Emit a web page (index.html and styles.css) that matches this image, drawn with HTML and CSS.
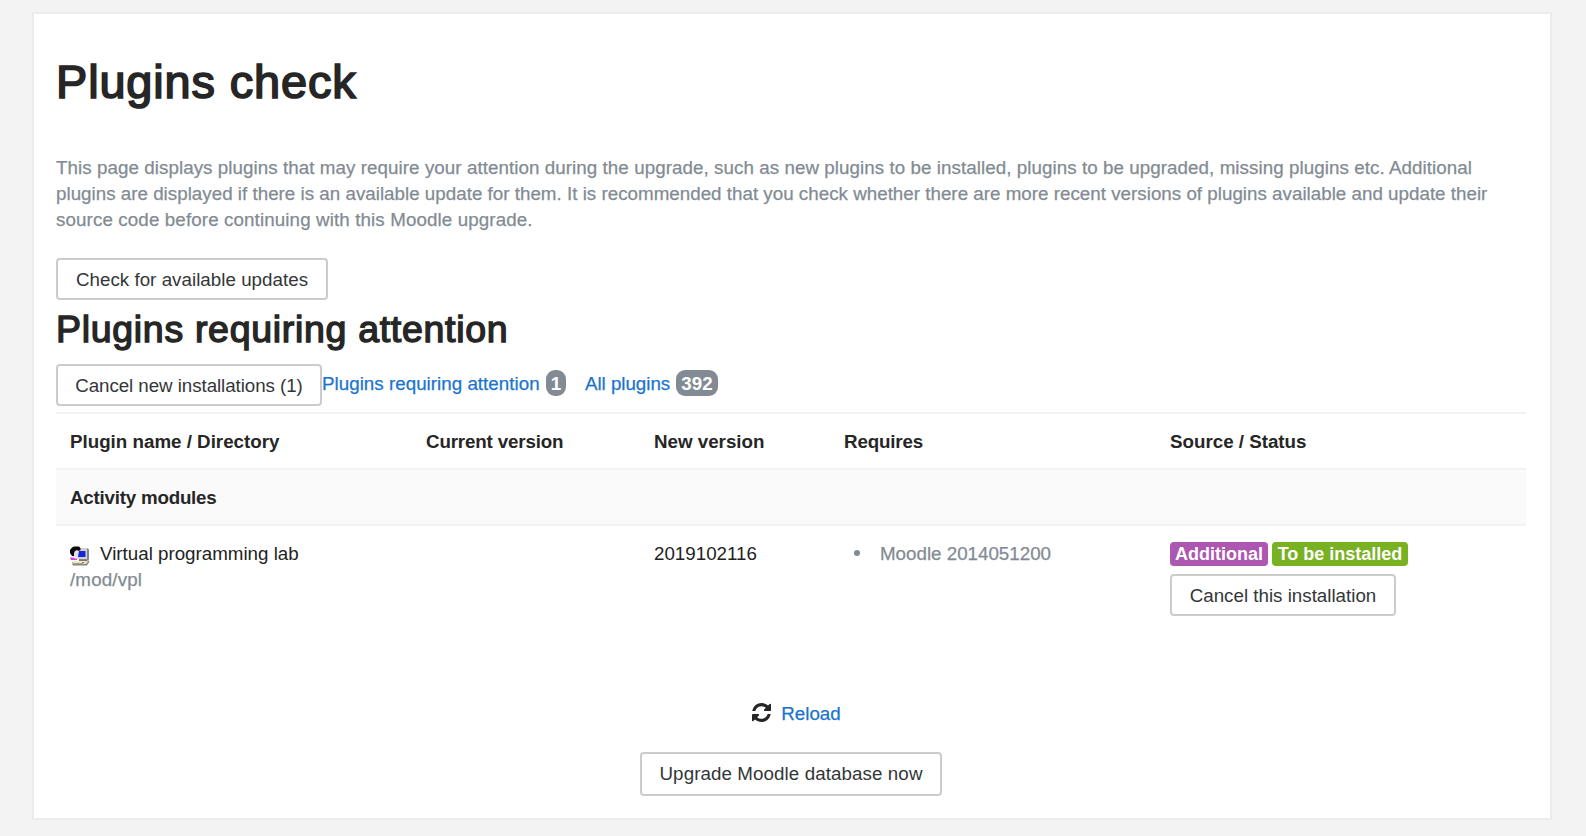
FILE: index.html
```html
<!DOCTYPE html>
<html lang="en">
<head>
<meta charset="utf-8">
<title>Plugins check</title>
<link rel="stylesheet" href="styles.css">
</head>
<body>
<main class="card">
  <h1 class="title">Plugins check</h1>
  <p class="intro"><span class="l1">This page displays plugins that may require your attention during the upgrade, such as new plugins to be installed, plugins to be upgraded, missing plugins etc. Additional</span><br><span class="l2">plugins are displayed if there is an available update for them. It is recommended that you check whether there are more recent versions of plugins available and update their</span><br><span class="l3">source code before continuing with this Moodle upgrade.</span></p>
  <button class="btn btn-check">Check for available updates</button>
  <h2 class="subtitle">Plugins requiring attention</h2>
  <div class="filters">
    <button class="btn btn-cancel-all">Cancel new installations (1)</button>
    <a class="link link-req" href="#">Plugins requiring attention</a><span class="count count-one">1</span>
    <a class="link link-all" href="#">All plugins</a><span class="count count-all">392</span>
  </div>
  <div class="table">
    <div class="row head">
      <div>Plugin name / Directory</div>
      <div class="tight">Current version</div>
      <div>New version</div>
      <div class="tight">Requires</div>
      <div>Source / Status</div>
    </div>
    <div class="row group"><div class="tighter">Activity modules</div></div>
    <div class="row plugin">
      <div>
        <div class="name">
          <svg class="icon" viewBox="0 0 20 20">
            <path d="M9 2h8l2 1.500v10l-1.500 1H9z" fill="#85858a"/>
            <path d="M9 2h8v11H7z" fill="#d3d2cf"/>
            <path d="M9 5h6.500v6H8z" fill="#1a24dc"/>
            <path d="M3 4h5v4l-1 3H3z" fill="#e4dcf5"/>
            <path d="M0 7V4l2-2.500L4 .5h5l1.500 1.500v2L8.500 5 7 4 5 5 4 7v3H2z" fill="#0a0a0a"/>
            <path d="M0 11.500h3l2 1h2v1.500H1z" fill="#e03be0"/>
            <path d="M9 14h8v1H9z" fill="#77756b"/>
            <path d="M2 16h13l3-2 1.500 1.500-2.500 4H3l-1-1.500z" fill="#8a8878"/>
            <path d="M3 15.500h12l2.500-1V17L15 18H2z" fill="#e2dfcb"/>
            <path d="M3 17h10v1H3z" fill="#a9ad72"/>
            <path d="M12 16h2v1h-2z" fill="#b55"/>
          </svg>
          <span>Virtual programming lab</span>
        </div>
        <div class="dir">/mod/vpl</div>
      </div>
      <div></div>
      <div>2019102116</div>
      <div class="req"><i class="dot"></i><span>Moodle 2014051200</span></div>
      <div class="status">
        <div class="labels"><span class="label add">Additional</span><span class="label inst">To be installed</span></div>
        <button class="btn btn-cancel-one">Cancel this installation</button>
      </div>
    </div>
  </div>
  <div class="reload">
    <svg class="spin" viewBox="0 0 1536 1536"><path fill="#262626" d="M1511 928q0 5-1 7-64 268-268 434.500T764 1536q-146 0-282.500-55T238 1324l-129 129q-19 19-45 19t-45-19-19-45V960q0-26 19-45t45-19h448q26 0 45 19t19 45-19 45l-137 137q71 66 161 102t187 36q134 0 250-65t186-179q11-17 53-117 8-23 30-23h192q13 0 22.500 9.500t9.500 22.500zm25-800v448q0 26-19 45t-45 19h-448q-26 0-45-19t-19-45 19-45l138-138Q969 256 768 256q-134 0-250 65T332 500q-11 17-53 117-8 23-30 23H50q-13 0-22.500-9.500T18 608v-7q65-268 270-434.500T768 0q146 0 284 55.500T1297 212l130-129q19-19 45-19t45 19 19 45z"/></svg>
    <a class="link" href="#">Reload</a>
  </div>
  <button class="btn btn-upgrade">Upgrade Moodle database now</button>
</main>
</body>
</html>
```
FILE: styles.css
```css
* { box-sizing: border-box; }
body {
  margin: 0;
  padding: 12px 34px 0 32px;
  background: #f3f3f3;
  color: #222;
  font: 18.75px/26px "Liberation Sans", Arial, sans-serif;
}
.card {
  display: flex;
  flex-direction: column;
  align-items: flex-start;
  height: 808px;
  padding: 40px 24px 0 22px;
  background: #fff;
  border: 2px solid #ececec;
}
.title, .subtitle {
  margin: 0;
  color: #262626;
  font-weight: 400;
  white-space: nowrap;
}
.title {
  font-size: 46.875px;
  line-height: 56px;
  letter-spacing: .88px;
  -webkit-text-stroke: 1.7px #262626;
}
.subtitle {
  margin-top: 7px;
  font-size: 37.5px;
  line-height: 45px;
  letter-spacing: .69px;
  -webkit-text-stroke: 1.4px #262626;
}
.intro {
  margin: 45px 0 25px;
  color: #828b93;
  white-space: nowrap;
}
.intro, .link, .dir, .req { -webkit-text-stroke: .25px currentColor; }
.l1 { letter-spacing: .07px; }
.l2 { letter-spacing: .02px; }
.l3 { letter-spacing: .12px; }
.btn {
  height: 42px;
  padding: 1px 0 0;
  background: #fff;
  border: 2px solid #ccc;
  border-radius: 4px;
  color: #333639;
  font: inherit;
  line-height: 36px;
  text-align: center;
  white-space: nowrap;
}
.btn-check { width: 272px; letter-spacing: .03px; }
.btn-cancel-all { width: 266px; letter-spacing: -.06px; }
.btn-cancel-one { width: 226px; margin-top: 8px; }
.btn-upgrade {
  align-self: center;
  width: 302px;
  height: 44px;
  margin-top: 25px;
  padding: 0 0 1px;
  letter-spacing: .09px;
}
.filters {
  display: flex;
  align-items: flex-start;
  margin-top: 12px;
}
.link { color: #1b74ce; text-decoration: none; white-space: nowrap; }
.link-req { width: 217px; margin: 7px 0 0; letter-spacing: .03px; }
.link-all { margin: 7px 0 0 19px; width: 85px; letter-spacing: -.03px; }
.count {
  height: 26px;
  margin: 6px 0 0 6px;
  border-radius: 9px;
  background: #828b93;
  color: #fff;
  font-weight: 700;
  line-height: 27px;
  text-align: center;
}
.count-one { width: 20px; margin-left: 7px; }
.count-all { width: 42px; }
.table { align-self: stretch; margin-top: 6px; }
.row {
  display: grid;
  grid-template-columns: 356px 228px 190px 326px 1fr;
  border-top: 2px solid #f2f2f2;
  padding: 15px 0 13px;
  white-space: nowrap;
}
.row > div { padding-left: 14px; }
.head, .group { font-weight: 700; color: #262626; }
.tight { letter-spacing: -.15px; }
.tighter { letter-spacing: -.22px; }
.group { background: #fafafa; }
.plugin { height: 161px; }
.name { display: flex; }
.icon { width: 20px; height: 20px; margin: 5px 10px 0 0; }
.dir { color: #828b93; letter-spacing: .15px; }
.req { display: flex; align-items: flex-start; color: #828b93; }
.dot { width: 6px; height: 6px; margin: 9px 20px 0 10px; border-radius: 50%; background: #828b93; }
.labels { display: flex; gap: 4px; padding-top: 1px; }
.label {
  height: 24px;
  border-radius: 4px;
  color: #fff;
  font-weight: 700;
  font-size: 18px;
  line-height: 24px;
  text-align: center;
}
.add { width: 98px; background: #ad57b1; }
.inst { width: 136px; background: #78b121; }
.reload {
  display: flex;
  align-self: center;
  align-items: flex-start;
  margin-top: 16px;
  padding-left: 11px;
}
.spin { width: 19px; height: 19px; margin: 2px 10px 0 0; }
```
